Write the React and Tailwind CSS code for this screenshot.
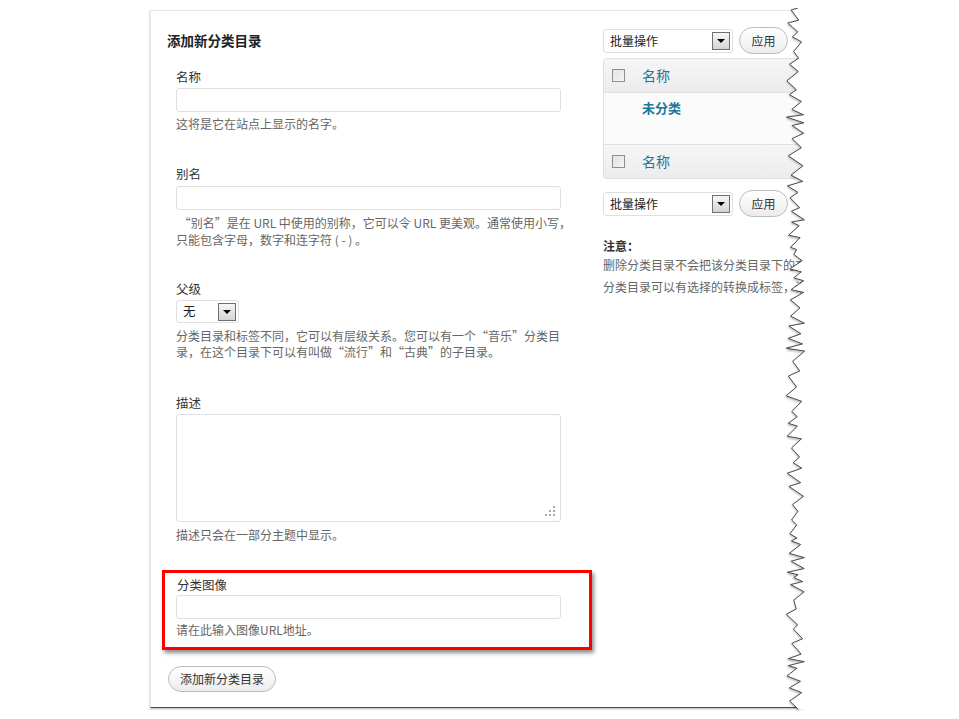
import React from 'react';

// jagged right edge of the torn screenshot
function tornPoints() {
  let s = 11;
  const rnd = () => {
    s = (s * 9301 + 49297) % 233280;
    return s / 233280;
  };
  const pts = [[14, 0]];
  let y = 2;
  let left = true;
  while (y < 700) {
    const x = left ? 2 + rnd() * 8 : 12 + rnd() * 9;
    pts.push([x, y]);
    y += 2 + rnd() * 9;
    left = !left;
  }
  pts.push([14, 701]);
  return pts;
}

const TORN = tornPoints();
const LINE = TORN.map(([x, y]) => `${x.toFixed(1)},${y.toFixed(1)}`).join(' ');

function ArrowBox() {
  return (
    <div className="w-[18px] h-[18px] border border-[#6f6f6f] bg-gradient-to-b from-[#f6f6f6] to-[#d4d4d4] flex items-center justify-center">
      <div className="w-0 h-0 border-l-[4px] border-r-[4px] border-t-[4px] border-l-transparent border-r-transparent border-t-black" />
    </div>
  );
}

function Checkbox() {
  return (
    <div className="w-[13px] h-[13px] border border-[#8e8e8e] bg-gradient-to-br from-[#dcdcdc] to-[#fafafa] p-[1px]">
      <div className="w-full h-full border border-[#ececec]" />
    </div>
  );
}

function BulkRow() {
  return (
    <div className="flex items-center h-[27px]">
      <div className="w-[130px] h-[24px] border border-[#dfdfdf] rounded-[3px] bg-white flex items-center justify-between pl-[6px] pr-[2px] text-[12px] text-[#222]">
        <span>批量操作</span>
        <ArrowBox />
      </div>
      <button className="ml-[6px] w-[49px] h-[27px] rounded-full border border-[#bbb] bg-gradient-to-b from-white to-[#ececec] text-[12px] text-[#333]">
        应用
      </button>
    </div>
  );
}

function Input() {
  return <input type="text" className="block w-[385px] h-[24px] border border-[#dfdfdf] rounded-[3px] bg-white outline-none" />;
}

export default function App() {
  return (
    <div className="relative w-[959px] h-[719px] bg-white overflow-hidden font-['Noto_Sans_CJK_SC',sans-serif]">
      <div className="ml-[150px] mt-[10px] w-[660px] h-[698px] border-t border-l border-[#e8e8e8] border-b border-b-[#4a4a4a] shadow-[0_1px_2px_rgba(0,0,0,0.3)] flex overflow-hidden">
        {/* Add new category form */}
        <div className="w-[452px] shrink-0 pl-[16px] pt-[20px]">
          <h3 className="text-[13.5px] leading-[18px] font-bold text-[#222]">添加新分类目录</h3>

          <div className="ml-[9px] mt-[20px]">
            <label className="block text-[12.5px] leading-[16px] text-[#333] mb-[3px]">名称</label>
            <Input />
            <p className="mt-[3px] text-[12px] leading-[17px] text-[#666]">这将是它在站点上显示的名字。</p>
          </div>

          <div className="ml-[9px] mt-[34px]">
            <label className="block text-[12.5px] leading-[16px] text-[#333] mb-[4px]">别名</label>
            <Input />
            <p className="mt-[4px] text-[12px] leading-[17px] text-[#666] whitespace-nowrap">
              &nbsp;“别名”是在 URL 中使用的别称，它可以令 URL 更美观。通常使用小写，
              <br />
              只能包含字母，数字和连字符 ( - ) 。
            </p>
          </div>

          <div className="ml-[9px] mt-[33px]">
            <label className="block text-[12.5px] leading-[16px] text-[#333] mb-[3px]">父级</label>
            <div className="w-[63px] h-[23px] border border-[#dfdfdf] rounded-[3px] bg-white flex items-center justify-between pl-[6px] pr-[2px] text-[12.5px] text-[#222]">
              <span>无</span>
              <ArrowBox />
            </div>
            <p className="mt-[5px] text-[12px] leading-[16px] text-[#666] whitespace-nowrap">
              分类目录和标签不同，它可以有层级关系。您可以有一个“音乐”分类目
              <br />
              录，在这个目录下可以有叫做“流行”和“古典”的子目录。
            </p>
          </div>

          <div className="ml-[9px] mt-[35px]">
            <label className="block text-[12.5px] leading-[16px] text-[#333] mb-[3px]">描述</label>
            <div className="relative w-[385px] h-[108px]">
              <textarea className="block w-full h-full border border-[#dfdfdf] rounded-[3px] bg-white outline-none resize-none" />
              <svg className="absolute right-[6px] bottom-[6px]" width="10" height="10" viewBox="0 0 10 10">
                <rect x="8" y="0" width="2" height="2" fill="#a8a8a8" />
                <rect x="4" y="4" width="2" height="2" fill="#a8a8a8" />
                <rect x="8" y="4" width="2" height="2" fill="#a8a8a8" />
                <rect x="0" y="8" width="2" height="2" fill="#a8a8a8" />
                <rect x="4" y="8" width="2" height="2" fill="#a8a8a8" />
                <rect x="8" y="8" width="2" height="2" fill="#a8a8a8" />
              </svg>
            </div>
            <p className="mt-[4px] text-[12px] leading-[17px] text-[#666]">描述只会在一部分主题中显示。</p>
          </div>

          {/* highlighted image field */}
          <div className="-ml-[5px] mt-[27px] w-[430px] border-[3px] border-[#ff0000] shadow-[2px_3px_4px_rgba(0,0,0,0.45)] pl-[11px] pt-[4px] pb-[9px]">
            <label className="block text-[12.5px] leading-[16px] text-[#333] mb-[2px] ml-[1px]">分类图像</label>
            <Input />
            <p className="mt-[2px] text-[12px] leading-[17px] text-[#666]">请在此输入图像URL地址。</p>
          </div>

          <button className="mt-[16px] ml-[1px] w-[108px] h-[26px] rounded-full border border-[#bbb] bg-gradient-to-b from-white to-[#ececec] text-[12px] text-[#333]">
            添加新分类目录
          </button>
        </div>

        {/* Category list */}
        <div className="w-[240px] shrink-0 pt-[16px]">
          <BulkRow />

          <div className="mt-[4px] w-[240px] border border-[#dfdfdf] rounded-[3px] bg-[#fbfbfb]">
            <div className="h-[34px] flex items-center bg-gradient-to-b from-[#f6f6f6] to-[#ececec] border-b border-[#dfdfdf] pl-[8px]">
              <Checkbox />
              <span className="ml-[17px] text-[14px] text-[#21759b]">名称</span>
            </div>
            <div className="h-[52px] pl-[38px] pt-[6px] border-b border-[#dfdfdf] leading-[18px]">
              <p className="text-[13px] leading-[18px] font-bold text-[#21759b]">未分类</p>
            </div>
            <div className="h-[33px] flex items-center bg-gradient-to-b from-[#f6f6f6] to-[#ececec] pl-[8px]">
              <Checkbox />
              <span className="ml-[17px] text-[14px] text-[#21759b]">名称</span>
            </div>
          </div>

          <div className="mt-[11px]">
            <BulkRow />
          </div>

          <div className="mt-[21px] text-[12px] whitespace-nowrap">
            <p className="leading-[16px] font-bold text-[#333]">注意：</p>
            <p className="leading-[22px] text-[#666]">删除分类目录不会把该分类目录下的文章一并删除。</p>
            <p className="leading-[22px] text-[#666]">分类目录可以有选择的转换成标签，请使用分类目录到标签转换器。</p>
          </div>
        </div>
      </div>

      {/* torn edge */}
      <svg className="absolute left-[784px] top-[8px]" width="40" height="704" viewBox="0 0 40 704">
        <defs>
          <filter id="tearShadow" x="-50%" y="-5%" width="200%" height="110%">
            <feGaussianBlur stdDeviation="1.2" />
          </filter>
        </defs>
        <polyline points={LINE} fill="none" stroke="#000" strokeOpacity="0.35" strokeWidth="2" filter="url(#tearShadow)" transform="translate(1,1)" />
        <polygon points={`${LINE} 40,704 40,0`} fill="#fff" />
        <polyline points={LINE} fill="none" stroke="#3a3a3a" strokeWidth="0.9" />
      </svg>
    </div>
  );
}
